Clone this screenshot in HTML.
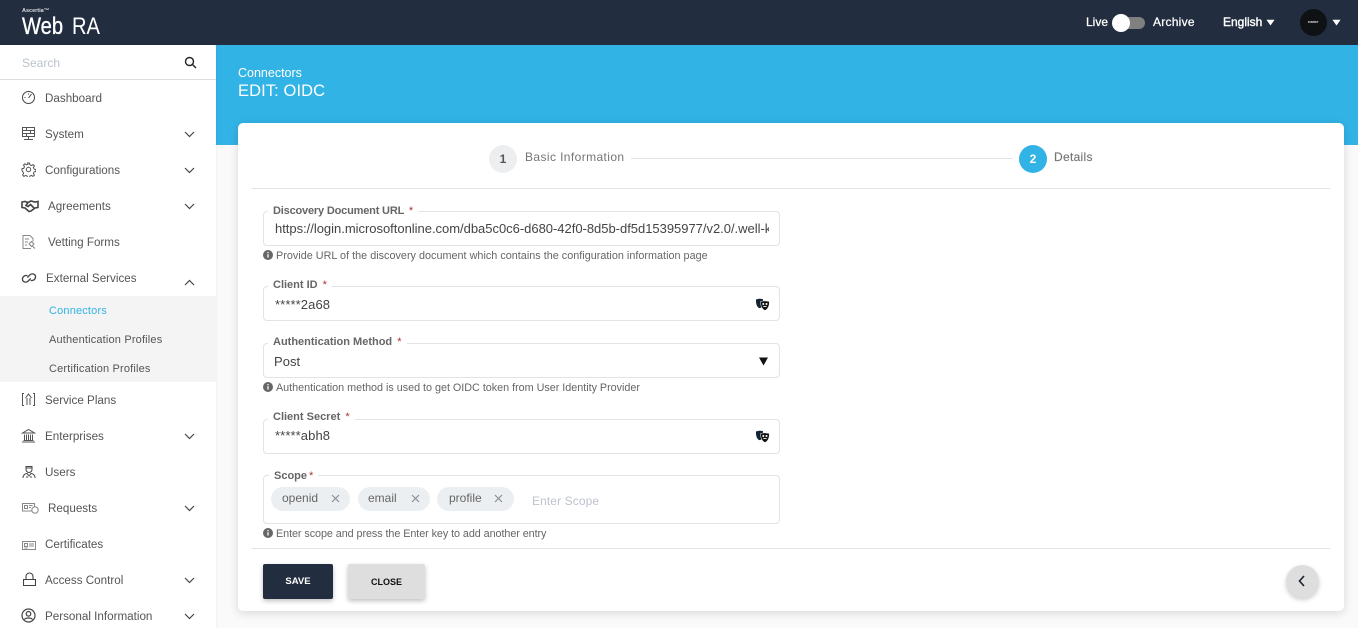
<!DOCTYPE html>
<html><head><meta charset="utf-8"><title>WebRA</title>
<style>
html,body{margin:0;padding:0;width:1358px;height:628px;overflow:hidden;background:#fafafa;font-family:"Liberation Sans",sans-serif;}
.a{position:absolute;white-space:nowrap;}
#hdr{left:0;top:0;width:1358px;height:45px;background:#222d3f;}
#side{left:0;top:45px;width:216px;height:583px;background:#fff;box-shadow:1px 0 2px rgba(0,0,0,.04);}
#blue{left:216px;top:45px;width:1142px;height:100px;background:#32b3e6;}
#card{left:238px;top:123px;width:1106px;height:488px;background:#fff;border-radius:5px;box-shadow:0 2px 10px rgba(0,0,0,.14);}
.m{font-size:11.65px;color:#555;line-height:18px;}
.s{font-size:11px;color:#555;line-height:14px;letter-spacing:.17px;}
.ic{position:absolute;fill:none;stroke:#444;stroke-width:1;}
.ch{position:absolute;left:184px;width:11px;height:7px;fill:none;stroke:#444;stroke-width:1.2;}
.f{position:absolute;left:263px;width:515px;border:1px solid #e1e3e7;border-radius:4px;background:#fff;}
.l{font-size:11px;font-weight:bold;color:#666;background:#fff;line-height:16px;padding:0 5px 0 5px;}
.l i{color:#a33;font-style:normal;font-weight:normal;font-size:11px;margin-left:2px;}
.v{font-size:13px;color:#444;line-height:16px;letter-spacing:.02px;}
.h{font-size:10.8px;color:#666;line-height:13px;}
.chip{position:absolute;top:487px;height:24px;border-radius:12px;background:#eceff1;}
.chip b{position:absolute;top:4px;font-weight:normal;font-size:12px;color:#666;line-height:14px;}
.chip svg{position:absolute;top:7px;width:9px;height:9px;stroke:#8a9096;stroke-width:1.2;fill:none;}
.info{position:absolute;width:10px;height:10px;}
.t{font-size:12px;color:#fff;line-height:14px;-webkit-text-stroke:.25px #fff;}
</style></head><body>

<div class="a" id="blue"></div>
<div class="a" id="hdr"></div>

<div class="a" style="left:22px;top:8px;font-size:5.5px;font-weight:bold;color:#ddd;line-height:7px;">Ascertia™</div>
<div class="a" style="left:22px;top:14px;font-size:24px;color:#fff;line-height:26px;transform:scaleX(.84);transform-origin:0 0;-webkit-text-stroke:.35px #fff;">Web</div>
<div class="a" style="left:72px;top:14px;font-size:24px;color:#fff;line-height:26px;transform:scaleX(.84);transform-origin:0 0;">RA</div>

<div class="a t" style="left:1086px;top:15px;">Live</div>
<div class="a" style="left:1113px;top:17px;width:32px;height:12px;border-radius:6px;background:#808080;"></div>
<div class="a" style="left:1112px;top:14px;width:18px;height:18px;border-radius:50%;background:#fff;"></div>
<div class="a t" style="left:1153px;top:15px;letter-spacing:.25px;">Archive</div>
<div class="a t" style="left:1223px;top:15px;-webkit-text-stroke:.4px #fff;">English</div>
<svg class="a" style="left:1266px;top:19px" width="9" height="7"><path d="M1 1h7L4.500 6z" fill="#fff" stroke="#fff" stroke-width=".6"/></svg>
<div class="a" style="left:1300px;top:9px;width:27px;height:27px;border-radius:50%;background:#0e1214;"></div>
<div class="a" style="left:1308px;top:19px;font-size:4px;color:#ddd;line-height:6px;font-weight:bold;">name</div>
<svg class="a" style="left:1332px;top:19px" width="9" height="7"><path d="M1 1h7L4.500 6z" fill="#fff" stroke="#fff" stroke-width=".6"/></svg>

<div class="a" id="side"></div>
<div class="a" style="left:0;top:79px;width:216px;height:1px;background:#ddd;"></div>
<div class="a" style="left:22px;top:56px;font-size:12px;color:#bcc3cc;line-height:14px;">Search</div>
<svg class="a" style="left:184px;top:56px" width="13" height="13" fill="none" stroke="#222" stroke-width="1.4"><circle cx="5.500" cy="5.500" r="4"/><path d="M8.500 8.500l3.500 3.500"/></svg>

<div class="a" style="left:0;top:296px;width:216px;height:86px;background:#f4f4f4;"></div>

<div class="a m" style="left:45px;top:90px;">Dashboard</div>
<div class="a m" style="left:45px;top:126px;">System</div>
<div class="a m" style="left:45px;top:162px;">Configurations</div>
<div class="a m" style="left:48px;top:198px;">Agreements</div>
<div class="a m" style="left:48px;top:234px;">Vetting Forms</div>
<div class="a m" style="left:46px;top:270px;">External Services</div>
<div class="a s" style="left:49px;top:304px;color:#32b3e6;">Connectors</div>
<div class="a s" style="left:49px;top:333px;">Authentication Profiles</div>
<div class="a s" style="left:49px;top:362px;">Certification Profiles</div>
<div class="a m" style="left:45px;top:392px;">Service Plans</div>
<div class="a m" style="left:45px;top:428px;">Enterprises</div>
<div class="a m" style="left:45px;top:464px;">Users</div>
<div class="a m" style="left:48px;top:500px;">Requests</div>
<div class="a m" style="left:45px;top:536px;">Certificates</div>
<div class="a m" style="left:45px;top:572px;">Access Control</div>
<div class="a m" style="left:45px;top:608px;">Personal Information</div>

<svg class="ch" style="top:131px" viewBox="0 0 11 7"><path d="M1 1l4.500 4.500L10 1"/></svg>
<svg class="ch" style="top:167px" viewBox="0 0 11 7"><path d="M1 1l4.500 4.500L10 1"/></svg>
<svg class="ch" style="top:203px" viewBox="0 0 11 7"><path d="M1 1l4.500 4.500L10 1"/></svg>
<svg class="ch" style="top:279px" viewBox="0 0 11 7"><path d="M1 6l4.500-4.500L10 6"/></svg>
<svg class="ch" style="top:433px" viewBox="0 0 11 7"><path d="M1 1l4.500 4.500L10 1"/></svg>
<svg class="ch" style="top:505px" viewBox="0 0 11 7"><path d="M1 1l4.500 4.500L10 1"/></svg>
<svg class="ch" style="top:577px" viewBox="0 0 11 7"><path d="M1 1l4.500 4.500L10 1"/></svg>
<svg class="ch" style="top:613px" viewBox="0 0 11 7"><path d="M1 1l4.500 4.500L10 1"/></svg>

<!-- sidebar icons -->
<svg class="ic" style="left:21px;top:90px" width="15" height="15"><circle cx="7.500" cy="7.500" r="6"/><path d="M7.500 8l3-4M3.500 7.500h1M7.500 3.500v1"/></svg>
<svg class="ic" style="left:22px;top:126px;stroke:#555" width="14" height="15"><path d="M.5 1.500h12v9h-12zM.5 4.500h12M.5 7.500h12M4.500 1.500v3M8.500 4.500v3M4.500 7.500v3M6.500 10.500v2.500M2 13.500h9"/></svg>
<svg class="ic" style="left:21px;top:162px;stroke:#555" width="15" height="15"><circle cx="7.500" cy="7.500" r="2.200"/><path d="M6.500 1h2l.4 1.800 1.600.7 1.600-1 1.300 1.400-1 1.500.7 1.700 1.800.4v2l-1.800.4-.7 1.600 1 1.600-1.400 1.300-1.500-1-1.700.7-.3 1.800h-2l-.4-1.800-1.600-.7-1.600 1-1.300-1.400 1-1.500-.7-1.700L1 8.700v-2l1.800-.4.7-1.600-1-1.600 1.400-1.300 1.500 1 1.700-.7z"/></svg>
<svg class="ic" style="left:21px;top:199px;stroke-width:1.600" width="18" height="14"><path d="M1 3l3-.5 3 1 3-1.500 4 1 3-.5v6l-3 .5-4 3-2 .5-4-3.500-3-.5zM7 3.500L5 6.500l2 1 2.500-2 4 4"/></svg>
<svg class="ic" style="left:21px;top:234px;stroke:#888" width="16" height="16"><path d="M9 1.500H2v13h8M9 1.500l3 3v3M4 5h4M4 8h3M4 11h2M8 10l2.500-2.500L13 10l-2.500 2.500zM11.500 12l2.500 2.500"/></svg>
<svg class="ic" style="left:21px;top:271px;stroke-width:1.300" width="16" height="14"><path d="M6.500 4.500H5A3.700 3.700 0 0 0 1.700 9.500a3.500 3.500 0 0 0 5 1l3-3M9.500 9.500H11a3.700 3.700 0 0 0 3.300-5 3.500 3.500 0 0 0-5-1l-3 3"/></svg>
<svg class="ic" style="left:21px;top:392px;stroke:#555" width="15" height="15"><path d="M3 1.500H1.500v12H3M12 1.500h1.500v12H12M4.500 6l3-4 3 4M6 6v7M9 6v7"/></svg>
<svg class="ic" style="left:21px;top:428px;stroke:#555" width="15" height="15"><path d="M1.500 5L7.500 1.500l6 3.500zM3.500 6.500v5.500M5.500 6.500v5.500M7.500 6.500v5.500M9.500 6.500v5.500M11.500 6.500v5.500M2.500 12.500h10M1 14h13"/></svg>
<svg class="ic" style="left:22px;top:464px" width="14" height="15"><path d="M4 2.500h6v3a3 3 0 0 1-6 0zM3.500 4h7M1 14c0-3 2-4.500 4-4.500L7 12l2-2.500c2 0 4 1.500 4 4.500M5 14v-2M9 14v-2"/></svg>
<svg class="ic" style="left:22px;top:502px;stroke:#888" width="17" height="13"><path d="M10 9H.5V1.500h12V5M2.500 3.500h3v3h-3zM7 3.500h3.500M7 5.500h2"/><circle cx="13" cy="8" r="3.200"/></svg>
<svg class="ic" style="left:22px;top:540px;stroke:#888" width="14" height="11"><path d="M.5 1.500h13v8H.5zM2.500 3.500h3v3h-3zM7 4h5M7 6h5M2.500 8h3"/></svg>
<svg class="ic" style="left:23px;top:572px;stroke-width:1.100" width="13" height="15"><path d="M.5 7.500h12v6H.5zM3 7.500V4.500a3.500 3.500 0 0 1 7 0v3"/></svg>
<svg class="ic" style="left:21px;top:608px;stroke-width:1.200" width="15" height="15"><circle cx="7.500" cy="7.500" r="6.500"/><circle cx="7.500" cy="5.800" r="2.300"/><path d="M3.500 11.500c1-2 7-2 8 0"/></svg>

<div class="a" style="left:238px;top:66px;font-size:12.5px;color:#fff;line-height:14px;">Connectors</div>
<div class="a" style="left:238px;top:82px;font-size:16.5px;color:#fff;line-height:18px;letter-spacing:.1px;">EDIT: OIDC</div>

<div class="a" id="card"></div>

<!-- stepper -->
<div class="a" style="left:489px;top:145px;width:28px;height:28px;border-radius:50%;background:#eceef0;color:#555;font-size:12px;font-weight:bold;line-height:28px;text-align:center;">1</div>
<div class="a" style="left:525px;top:150px;font-size:12px;color:#757575;line-height:15px;letter-spacing:.4px;">Basic Information</div>
<div class="a" style="left:631px;top:158px;width:381px;height:1px;background:#e3e3e3;"></div>
<div class="a" style="left:1019px;top:145px;width:28px;height:28px;border-radius:50%;background:#32b3e6;color:#fff;font-size:12px;font-weight:bold;line-height:28px;text-align:center;">2</div>
<div class="a" style="left:1054px;top:150px;font-size:12px;color:#757575;line-height:15px;letter-spacing:.3px;-webkit-text-stroke:.15px #757575;">Details</div>
<div class="a" style="left:252px;top:188px;width:1078px;height:1px;background:#e3e3e3;"></div>

<!-- fields -->
<div class="f" style="top:211px;height:33px;"></div>
<div class="a l" style="left:268px;top:203px;letter-spacing:-.18px;">Discovery Document URL <i>*</i></div>
<div class="a v" style="left:275px;top:221px;width:494px;overflow:hidden;letter-spacing:-.02px;">https://login.microsoftonline.com/dba5c0c6-d680-42f0-8d5b-df5d15395977/v2.0/.well-known/openid-configuration</div>
<svg class="info" style="left:263px;top:250px" viewBox="0 0 10 10"><circle cx="5" cy="5" r="5" fill="#666"/><path d="M5 4.300v3.200M5 2v1.300" stroke="#fff" stroke-width="1.300"/></svg>
<div class="a h" style="left:276px;top:250px;letter-spacing:.02px;">Provide URL of the discovery document which contains the configuration information page</div>

<div class="f" style="top:286px;height:33px;"></div>
<div class="a l" style="left:268px;top:277px;">Client ID <i>*</i></div>
<div class="a v" style="left:275px;top:297px;letter-spacing:.1px;">*****2a68</div>
<svg class="a" style="left:755px;top:298px" width="15" height="13"><path d="M1 1.500C3 .5 6 .5 8 1.200L8 7C7 9.500 5 10.500 4 10C2 9 .8 6 1 1.500z" fill="#123"/><path d="M5.500 3.500C8 2.700 11 2.700 14.300 3.500C14.600 7.500 13 11 10 12.500C7.500 11.500 5.300 8 5.500 3.500z" fill="#111" stroke="#fff" stroke-width=".5"/><circle cx="8.300" cy="6" r="1" fill="#fff"/><circle cx="11.500" cy="6" r="1" fill="#fff"/><path d="M8.300 8.500h3.200" stroke="#fff" stroke-width=".9"/></svg>

<div class="f" style="top:343px;height:33px;"></div>
<div class="a l" style="left:268px;top:334px;">Authentication Method <i>*</i></div>
<div class="a v" style="left:274px;top:354px;">Post</div>
<svg class="a" style="left:759px;top:357px" width="9" height="9"><path d="M0 .5h9L4.500 8.500z" fill="#111"/></svg>
<svg class="info" style="left:263px;top:382px" viewBox="0 0 10 10"><circle cx="5" cy="5" r="5" fill="#666"/><path d="M5 4.300v3.200M5 2v1.300" stroke="#fff" stroke-width="1.300"/></svg>
<div class="a h" style="left:276px;top:382px;letter-spacing:-.02px;">Authentication method is used to get OIDC token from User Identity Provider</div>

<div class="f" style="top:419px;height:33px;"></div>
<div class="a l" style="left:268px;top:409px;">Client Secret <i>*</i></div>
<div class="a v" style="left:275px;top:428px;letter-spacing:.1px;">*****abh8</div>
<svg class="a" style="left:755px;top:430px" width="15" height="13"><path d="M1 1.500C3 .5 6 .5 8 1.200L8 7C7 9.500 5 10.500 4 10C2 9 .8 6 1 1.500z" fill="#123"/><path d="M5.500 3.500C8 2.700 11 2.700 14.300 3.500C14.600 7.500 13 11 10 12.500C7.500 11.500 5.300 8 5.500 3.500z" fill="#111" stroke="#fff" stroke-width=".5"/><circle cx="8.300" cy="6" r="1" fill="#fff"/><circle cx="11.500" cy="6" r="1" fill="#fff"/><path d="M8.300 8.500h3.200" stroke="#fff" stroke-width=".9"/></svg>

<div class="f" style="top:475px;height:47px;"></div>
<div class="a l" style="left:269px;top:468px;">Scope<i style="margin-left:2px;">*</i></div>
<div class="chip" style="left:271px;width:79px;"><b style="left:11px;">openid</b><svg style="left:60px" viewBox="0 0 9 9"><path d="M1 1l7 7M8 1l-7 7"/></svg></div>
<div class="chip" style="left:358px;width:72px;"><b style="left:10px;">email</b><svg style="left:53px" viewBox="0 0 9 9"><path d="M1 1l7 7M8 1l-7 7"/></svg></div>
<div class="chip" style="left:437px;width:77px;"><b style="left:12px;">profile</b><svg style="left:57px" viewBox="0 0 9 9"><path d="M1 1l7 7M8 1l-7 7"/></svg></div>
<div class="a" style="left:532px;top:494px;font-size:12px;color:#bcc3cc;line-height:15px;letter-spacing:.1px;">Enter Scope</div>
<svg class="info" style="left:263px;top:528px" viewBox="0 0 10 10"><circle cx="5" cy="5" r="5" fill="#666"/><path d="M5 4.300v3.200M5 2v1.300" stroke="#fff" stroke-width="1.300"/></svg>
<div class="a h" style="left:276px;top:528px;letter-spacing:-.07px;">Enter scope and press the Enter key to add another entry</div>

<div class="a" style="left:252px;top:548px;width:1078px;height:1px;background:#e3e3e3;"></div>

<div class="a" style="left:263px;top:564px;width:70px;height:35px;background:#222d3f;border-radius:2px;box-shadow:0 2px 5px rgba(0,0,0,.25);color:#fff;font-size:9.5px;font-weight:bold;line-height:36px;text-align:center;">SAVE</div>
<div class="a" style="left:348px;top:564px;width:77px;height:35px;background:#dedede;border-radius:2px;box-shadow:0 2px 5px rgba(0,0,0,.25);color:#111;font-size:9px;font-weight:bold;line-height:36px;text-align:center;">CLOSE</div>

<div class="a" style="left:1286px;top:565px;width:33px;height:33px;border-radius:50%;background:#dedede;box-shadow:0 2px 5px rgba(0,0,0,.2);"></div>
<svg class="a" style="left:1298px;top:575px" width="8" height="12" fill="none" stroke="#1a2230" stroke-width="1.600"><path d="M6 1L1.500 6 6 11"/></svg>

</body></html>
